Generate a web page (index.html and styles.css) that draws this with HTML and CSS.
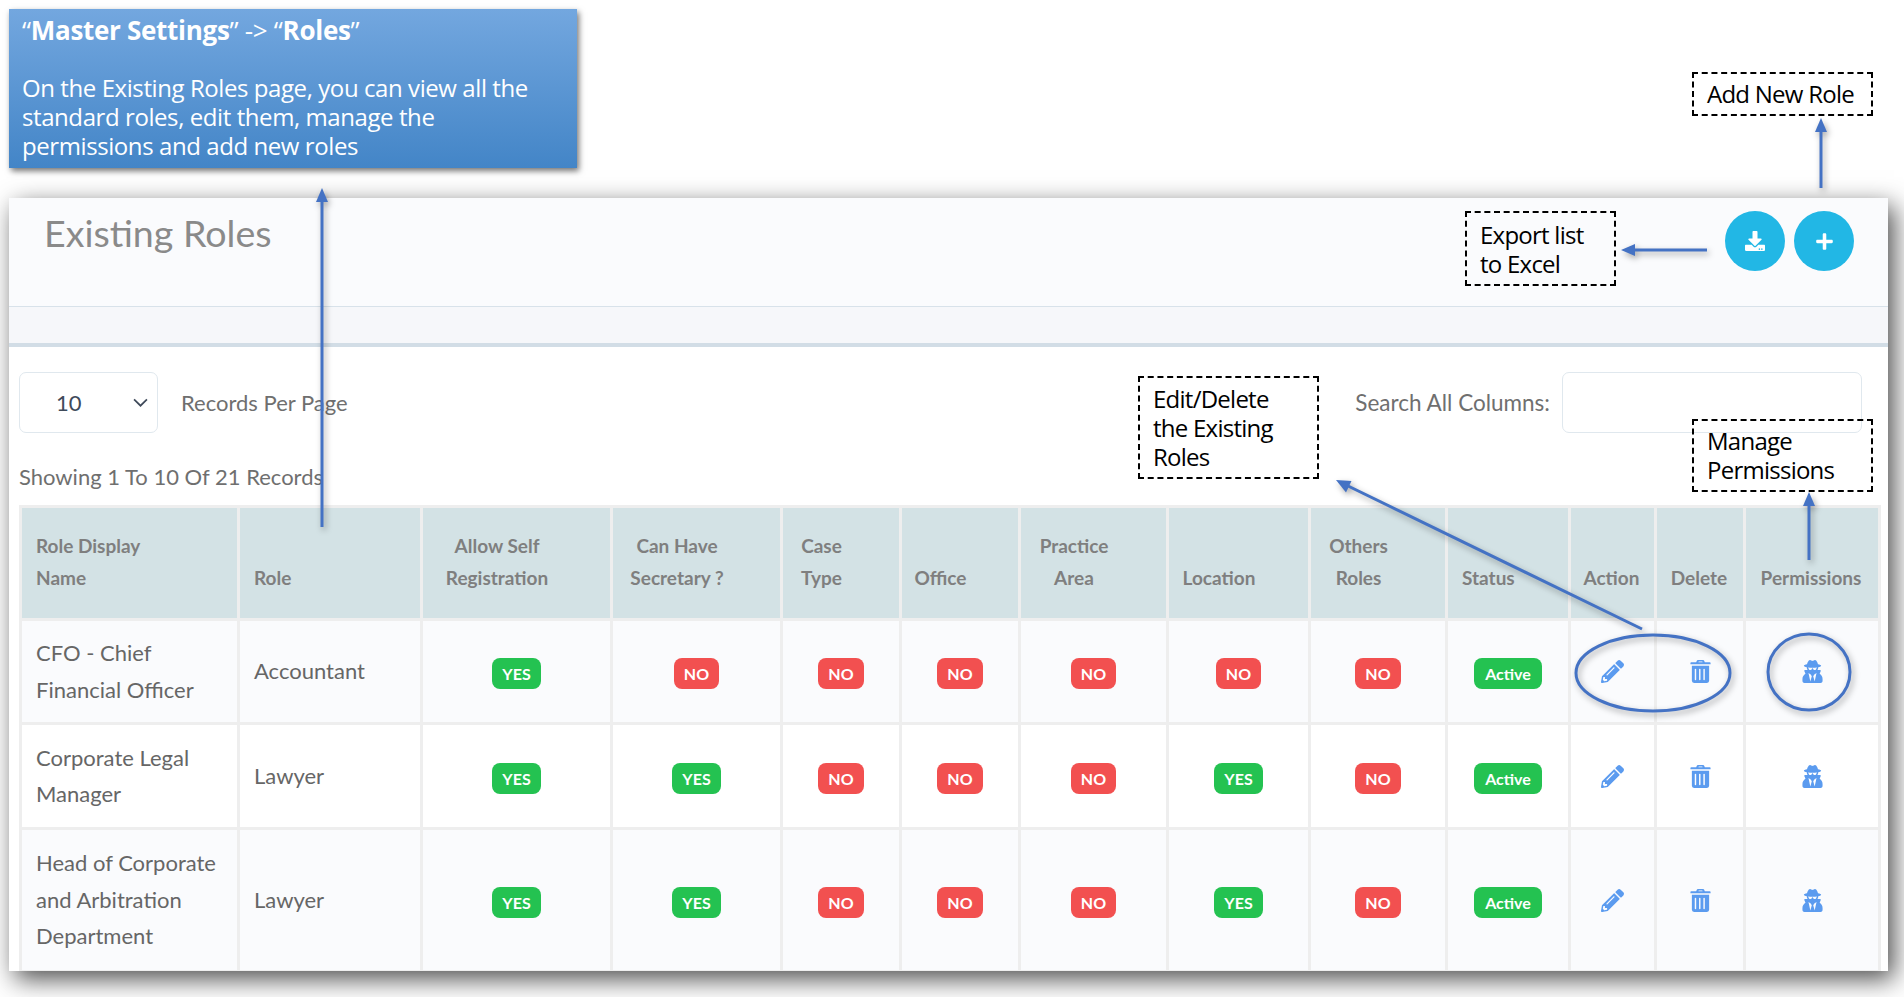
FILE: index.html
```html
<!DOCTYPE html>
<html lang="en">
<head>
<meta charset="utf-8">
<title>Existing Roles</title>
<link rel="stylesheet" href="styles.css">
</head>
<body>
<div class="page">
  <svg width="0" height="0" class="defs" aria-hidden="true">
    <defs>
      <symbol id="i-pencil" viewBox="0 0 512 512"><path d="M497.9 142.1l-46.1 46.1c-4.7 4.7-12.3 4.7-17 0l-111-111c-4.7-4.7-4.7-12.3 0-17l46.1-46.1c18.7-18.7 49.1-18.7 67.9 0l60.1 60.1c18.8 18.7 18.8 49.1 0 67.9zM284.2 99.8L21.6 362.4.4 483.9c-2.9 16.4 11.4 30.6 27.8 27.8l121.5-21.3 262.6-262.6c4.7-4.7 4.7-12.3 0-17l-111-111c-4.8-4.7-12.4-4.7-17.1 0zM124.1 339.9c-5.5-5.5-5.5-14.3 0-19.8l154-154c5.5-5.5 14.3-5.5 19.8 0s5.5 14.3 0 19.8l-154 154c-5.5 5.5-14.3 5.5-19.8 0zM88 424h48v36.3l-64.5 11.3-31.1-31.1L51.7 376H88v48z"/></symbol>
      <symbol id="i-trash" viewBox="0 0 448 512"><path fill-rule="evenodd" d="M32 128h384v336a48 48 0 0 1-48 48H80a48 48 0 0 1-48-48zM112 192a16 16 0 0 0-16 16v224a16 16 0 0 0 32 0V208a16 16 0 0 0-16-16zM208 192a16 16 0 0 0-16 16v224a16 16 0 0 0 32 0V208a16 16 0 0 0-16-16zM304 192a16 16 0 0 0-16 16v224a16 16 0 0 0 32 0V208a16 16 0 0 0-16-16z"/><path fill-rule="evenodd" d="M16 48h112l14-32a26 26 0 0 1 24-16h116a26 26 0 0 1 24 16l14 32h112a16 16 0 0 1 16 16v32H0V64a16 16 0 0 1 16-16zM178 48h92l-6-14h-80z"/></symbol>
      <symbol id="i-spy" viewBox="0 0 448 512"><path d="M383.9 308.3l23.9-62.6c4-10.5-3.7-21.7-15-21.7h-58.5c11-18.9 17.8-40.6 17.8-64v-.3c39.2-7.8 64-19.1 64-31.7 0-13.3-27.3-25.1-70.1-33-9.2-32.8-27-65.8-40.6-82.8-9.5-11.9-25.9-15.6-39.5-8.8l-27.6 13.8c-9 4.5-19.6 4.5-28.6 0L182.1 3.4c-13.6-6.8-30-3.1-39.5 8.8-13.5 17-31.4 50-40.6 82.8-42.7 7.9-70 19.7-70 33 0 12.6 24.8 23.9 64 31.7v.3c0 23.4 6.8 45.1 17.8 64H56.3c-11.5 0-19.2 11.7-14.7 22.3l25.8 60.2C27.3 329.8 0 372.7 0 422.4v44.8C0 491.9 20.1 512 44.8 512h358.4c24.7 0 44.8-20.1 44.8-44.8v-44.8c0-48.4-25.8-90.4-64.1-114.1zM176 480l-41.6-192 49.6 32 24 40-32 120zm96 0l-32-120 24-40 49.6-32L272 480zm41.7-298.5c-3.9 11.9-7 24.6-16.5 33.4-10.1 9.3-48 22.4-64-25-2.8-8.4-15.4-8.4-18.3 0-17 50.2-56 32.4-64 25-9.5-8.8-12.7-21.5-16.5-33.4-.8-2.5-6.3-5.7-6.3-5.8v-10.8c28.3 3.6 61 5.8 96 5.8s67.7-2.1 96-5.8v10.8c-.1.1-5.6 3.2-6.4 5.8z"/></symbol>
    </defs>
  </svg>

  <section class="intro">
    <h2 class="intro-title"><span class="q">“</span><b>Master Settings</b><span class="q">”</span> -&gt; <span class="q">“</span><b>Roles</b><span class="q">”</span></h2>
    <p class="intro-text">On the Existing Roles page, you can view all the<br>standard roles, edit them, manage the<br>permissions and add new roles</p>
  </section>

  <main class="card">
    <header class="card-head">
      <h1 class="card-title">Existing Roles</h1>
      <div class="card-actions">
        <button class="round" type="button" aria-label="Export list to Excel">
          <svg class="round-ico" viewBox="0 0 512 512"><path d="M216 0h80c13.3 0 24 10.7 24 24v168h87.7c17.8 0 26.7 21.5 14.1 34.1L269.7 378.3c-7.5 7.5-19.8 7.5-27.3 0L90.1 226.1c-12.6-12.6-3.7-34.1 14.1-34.1H192V24c0-13.3 10.7-24 24-24zm296 376v112c0 13.3-10.7 24-24 24H24c-13.3 0-24-10.7-24-24V376c0-13.3 10.7-24 24-24h146.7l49 49c20.1 20.1 52.5 20.1 72.6 0l49-49H488c13.3 0 24 10.7 24 24zm-124 88c0-11-9-20-20-20s-20 9-20 20 9 20 20 20 20-9 20-20zm64 0c0-11-9-20-20-20s-20 9-20 20 9 20 20 20 20-9 20-20z"/></svg>
        </button>
        <button class="round" type="button" aria-label="Add New Role">
          <svg class="round-ico plus" viewBox="0 0 448 512"><path d="M416 208H272V64c0-17.67-14.33-32-32-32h-32c-17.67 0-32 14.33-32 32v144H32c-17.67 0-32 14.33-32 32v32c0 17.67 14.33 32 32 32h144v144c0 17.67 14.33 32 32 32h32c17.67 0 32-14.33 32-32V304h144c17.67 0 32-14.33 32-32v-32c0-17.67-14.33-32-32-32z"/></svg>
        </button>
      </div>
    </header>
    <div class="card-strip"></div>
    <div class="card-body">
      <div class="toolbar">
        <div class="per-page">
          <div class="select"><span>10</span><svg class="chev" viewBox="0 0 14 8"><path d="M1 1l6 6 6-6"/></svg></div>
          <span class="label">Records Per Page</span>
        </div>
        <div class="search">
          <span class="label label-search">Search All Columns:</span>
          <div class="search-box"></div>
        </div>
      </div>
      <p class="showing">Showing 1 To 10 Of 21 Records</p>
      <table class="roles">
        <thead>
          <tr>
            <th class="c1 left">Role Display<br>Name</th>
            <th class="c2 left">Role</th>
            <th class="c3 sort">Allow Self<br>Registration</th>
            <th class="c4 sort">Can Have<br>Secretary ?</th>
            <th class="c5 sort">Case<br>Type</th>
            <th class="c6 sort">Office</th>
            <th class="c7 sort">Practice<br>Area</th>
            <th class="c8 sort">Location</th>
            <th class="c9 sort">Others<br>Roles</th>
            <th class="c10 left">Status</th>
            <th class="c11">Action</th>
            <th class="c12">Delete</th>
            <th class="c13">Permissions</th>
          </tr>
        </thead>
        <tbody>
          <tr class="r1 alt">
            <td class="left">CFO - Chief Financial Officer</td><td class="left">Accountant</td>
            <td><span class="b yes">YES</span></td><td><span class="b no">NO</span></td><td><span class="b no">NO</span></td><td><span class="b no">NO</span></td><td><span class="b no">NO</span></td><td><span class="b no">NO</span></td><td><span class="b no">NO</span></td>
            <td><span class="b act">Active</span></td>
            <td><svg class="ico"><use href="#i-pencil"/></svg></td><td><svg class="ico"><use href="#i-trash"/></svg></td><td><svg class="ico"><use href="#i-spy"/></svg></td>
          </tr>
          <tr class="r2">
            <td class="left">Corporate Legal Manager</td><td class="left">Lawyer</td>
            <td><span class="b yes">YES</span></td><td><span class="b yes">YES</span></td><td><span class="b no">NO</span></td><td><span class="b no">NO</span></td><td><span class="b no">NO</span></td><td><span class="b yes">YES</span></td><td><span class="b no">NO</span></td>
            <td><span class="b act">Active</span></td>
            <td><svg class="ico"><use href="#i-pencil"/></svg></td><td><svg class="ico"><use href="#i-trash"/></svg></td><td><svg class="ico"><use href="#i-spy"/></svg></td>
          </tr>
          <tr class="r3 alt">
            <td class="left">Head of Corporate and Arbitration Department</td><td class="left">Lawyer</td>
            <td><span class="b yes">YES</span></td><td><span class="b yes">YES</span></td><td><span class="b no">NO</span></td><td><span class="b no">NO</span></td><td><span class="b no">NO</span></td><td><span class="b yes">YES</span></td><td><span class="b no">NO</span></td>
            <td><span class="b act">Active</span></td>
            <td><svg class="ico"><use href="#i-pencil"/></svg></td><td><svg class="ico"><use href="#i-trash"/></svg></td><td><svg class="ico"><use href="#i-spy"/></svg></td>
          </tr>
        </tbody>
      </table>
    </div>
  </main>

  <svg class="marks" viewBox="0 0 1904 997" width="1904" height="997" aria-hidden="true">
    <g class="mark-group">
      <path class="line" d="M322 527V198"/><path class="head" d="M322 188l-6 14h12z"/>
      <path class="line" d="M1821 188V128"/><path class="head" d="M1821 118l-6 14h12z"/>
      <path class="line" d="M1707 250H1632"/><path class="head" d="M1621 250l14-6v12z"/>
      <path class="line" d="M1642 629L1346 485"/><path class="head" d="M1336 480l15.500 1-5.500 11.500z"/>
      <path class="line" d="M1809 560V502"/><path class="head" d="M1809 492l-6 14h12z"/>
      <ellipse class="line" cx="1653" cy="673" rx="77" ry="38"/>
      <ellipse class="line" cx="1809" cy="672" rx="41" ry="38"/>
    </g>
  </svg>

  <div class="note note-add">Add New Role</div>
  <div class="note note-export">Export list<br>to Excel</div>
  <div class="note note-edit">Edit/Delete<br>the Existing<br>Roles</div>
  <div class="note note-perm">Manage<br>Permissions</div>
</div>
</body>
</html>
```
FILE: styles.css
```css
* { box-sizing: border-box; }
html, body { margin: 0; padding: 0; background: #fff; }
.page {
  position: relative;
  width: 1904px;
  height: 997px;
  overflow: hidden;
  padding: 9px 0 0 9px;
  font-family: Lato, "Open Sans", sans-serif;
}
.defs { position: absolute; }

.intro {
  width: 568px;
  height: 159px;
  padding: 6px 13px;
  color: #fff;
  background: linear-gradient(#73a7df, #4385c7);
  box-shadow: 2px 3px 6px rgba(0, 0, 0, .55);
  font-family: "Open Sans", sans-serif;
}
.intro-title { margin: 1px 0 28px; font-size: 26px; line-height: 29px; font-weight: 400; letter-spacing: -.3px; }
.intro-title b { font-weight: 700; }
.intro-text { margin: 0; font-size: 24px; line-height: 29px; letter-spacing: -.42px; }

.card {
  width: 1879px;
  height: 773px;
  margin-top: 30px;
  background: #fff;
  overflow: hidden;
  box-shadow: 6px 8px 24px rgba(0, 0, 0, .7);
}
.card-head {
  height: 109px;
  display: flex;
  justify-content: space-between;
  align-items: flex-start;
  padding: 0 34px 0 35px;
  background: #fafbfd;
  border-bottom: 1px solid #d8e2ea;
}
.card-title {
  margin: 12px 0 0;
  font-size: 37.6px;
  line-height: 46px;
  font-weight: 400;
  color: #8a8a8a;
}
.card-actions { display: flex; gap: 9px; padding-top: 13px; }
.round {
  width: 60px;
  height: 60px;
  padding: 0;
  border: 0;
  border-radius: 50%;
  background: #22b7e5;
  display: flex;
  align-items: center;
  justify-content: center;
}
.round-ico { width: 20px; height: 20px; fill: #fff; }
.round-ico.plus { width: 19px; height: 19px; }
.card-strip { height: 40px; background: #f6f7fa; border-bottom: 4px solid #d2dde6; }

.card-body { padding: 0 10px 0 10px; }
.toolbar { display: flex; justify-content: space-between; padding-top: 25px; }
.per-page, .search { display: flex; align-items: center; }
.per-page { gap: 23px; }
.search { gap: 12px; padding-right: 16px; }
.label { font-size: 22px; color: #6f6f6f; }
.label-search { font-size: 22.5px; }
.select {
  width: 139px;
  height: 61px;
  padding: 0 9px 0 36px;
  display: flex;
  align-items: center;
  justify-content: space-between;
  border: 1px solid #e0e8ee;
  border-radius: 7px;
  font-size: 22px;
  color: #3f4a5a;
}
.chev { width: 15px; height: 9px; fill: none; stroke: #3f4a5a; stroke-width: 1.6; }
.search-box {
  width: 300px;
  height: 61px;
  border: 1px solid #e0e8ee;
  border-radius: 7px;
}
.showing {
  margin: 30px 0 0;
  font-size: 22px;
  line-height: 28px;
  color: #6f6f6f;
}

.roles {
  width: 1859px;
  margin-top: 14px;
  table-layout: fixed;
  border-collapse: collapse;
  font-size: 22px;
  color: #666;
}
.roles th, .roles td { border: 3px solid #eee; text-align: center; }
.roles th {
  height: 113px;
  padding: 0 10px 24px;
  vertical-align: bottom;
  background: #d3e2e5;
  color: #7f7f7f;
  font-size: 19px;
  line-height: 32px;
  font-weight: 700;
}
.roles th.sort { padding-right: 49px; }
.roles th.c11, .roles th.c12, .roles th.c13 { padding-left: 6px; padding-right: 8px; }
.roles td { padding: 0 14px; line-height: 36.5px; }
.roles .left { text-align: left; padding-left: 14px; }
.r1 { height: 104px; }
.r2 { height: 105px; }
.r3 { height: 143px; }
.alt td { background: #fafbfd; }

.c1 { width: 218px; }
.c2 { width: 183px; }
.c3 { width: 190px; }
.c4 { width: 170px; }
.c5 { width: 119px; }
.c6 { width: 119px; }
.c7 { width: 148px; }
.c8 { width: 142px; }
.c9 { width: 137px; }
.c10 { width: 123px; }
.c11 { width: 86px; }
.c12 { width: 89px; }
.c13 { width: 135px; }

.b {
  display: inline-block;
  height: 31px;
  padding: 0 10px;
  border-radius: 8px;
  color: #fff;
  font-size: 16px;
  line-height: 31px;
  font-weight: 700;
  vertical-align: middle;
}
.act { padding: 0 11px; }
.yes, .act { background: #24c251; }
.no { background: #f25050; }
.ico { width: 23px; height: 23px; fill: #5b9bef; vertical-align: middle; margin-bottom: 4px; }

.marks { position: absolute; left: 0; top: 0; pointer-events: none; }
.mark-group { filter: drop-shadow(2px 3px 3px rgba(0, 0, 0, .35)); }
.line { fill: none; stroke: #4472c4; stroke-width: 3; }
.head { fill: #4472c4; }

.note {
  position: absolute;
  padding: 0 13px;
  border: 2px dashed #000;
  background: transparent;
  color: #000;
  font-family: "Open Sans", sans-serif;
  font-size: 24px;
  line-height: 29px;
  letter-spacing: -.75px;
}
.note-add { left: 1692px; top: 72px; width: 181px; height: 44px; padding-top: 5px; }
.note-export { left: 1465px; top: 211px; width: 151px; height: 75px; padding-top: 7px; }
.note-edit { left: 1138px; top: 376px; width: 181px; height: 103px; padding-top: 6px; }
.note-perm { left: 1692px; top: 419px; width: 181px; height: 73px; padding-top: 5px; }
```
